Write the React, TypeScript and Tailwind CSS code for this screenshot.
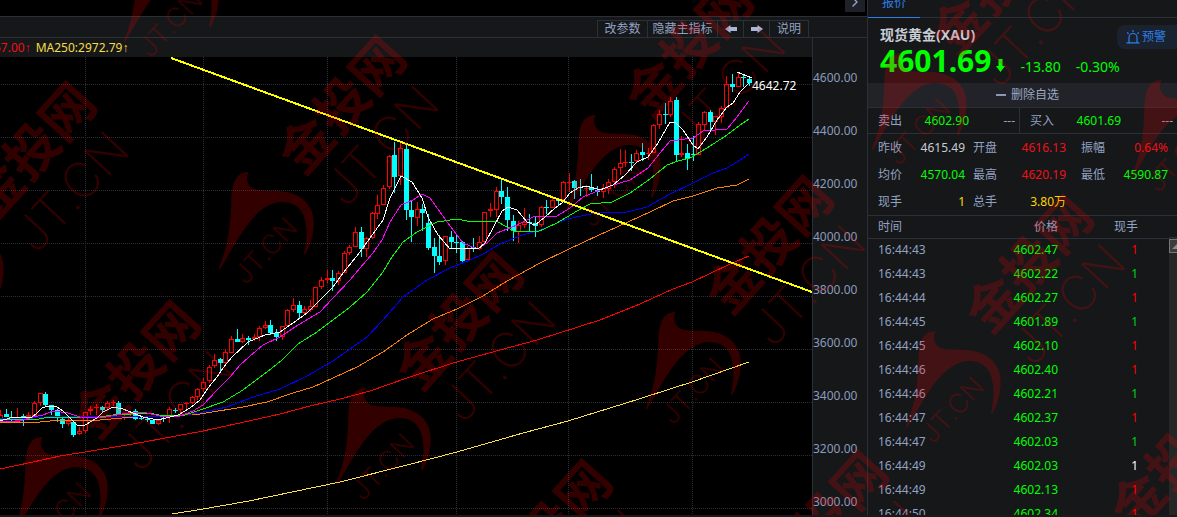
import { ChevronRight } from 'lucide-react';
import clsx from 'clsx';

type Direction = 'up' | 'down';
// high, body top, body bottom, low, direction
type Candle = [number, number, number, number, Direction];

interface Tick {
	time: string;
	price: string;
	volume: string;
	color: string;
}

interface Quote {
	label: string;
	value: string;
	color: string;
}

const u: Direction = 'up';
const d: Direction = 'down';

const candles: Candle[] = [
	[410, 415, 421, 423, u], [409, 414, 417, 417, d], [411, 417, 420, 421, d], [408, 417, 421, 421, u],
	[414, 416, 419, 426, d], [412, 415, 417, 418, u], [401, 403, 416, 416, u], [393, 393, 403, 406, u],
	[392, 394, 405, 407, d], [405, 405, 410, 415, d], [409, 410, 417, 422, d], [417, 419, 424, 428, d],
	[418, 421, 424, 426, u], [420, 422, 435, 437, d], [427, 431, 434, 435, u], [412, 412, 431, 433, u],
	[406, 409, 411, 415, u], [404, 407, 408, 415, u], [406, 407, 410, 413, d], [401, 403, 408, 411, u],
	[400, 402, 403, 406, u], [401, 403, 414, 414, d], [413, 414, 415, 420, u], [412, 413, 415, 417, u],
	[409, 411, 419, 420, d], [416, 418, 419, 420, d], [417, 419, 420, 422, d], [420, 420, 424, 424, d],
	[419, 420, 424, 425, u], [416, 418, 419, 422, d], [407, 409, 416, 423, u], [408, 410, 411, 413, d],
	[404, 404, 410, 415, u], [402, 403, 404, 410, u], [396, 397, 403, 404, u], [388, 389, 397, 400, u],
	[378, 382, 389, 392, u], [365, 367, 381, 383, u], [354, 360, 366, 368, u], [358, 359, 363, 372, d],
	[349, 352, 363, 365, u], [336, 339, 353, 353, u], [329, 339, 342, 342, d], [334, 338, 342, 343, u],
	[336, 338, 340, 345, d], [334, 337, 339, 341, u], [326, 328, 337, 341, u], [321, 325, 328, 329, u],
	[320, 325, 333, 335, d], [329, 333, 337, 341, d], [326, 326, 337, 340, u], [309, 310, 326, 326, u],
	[298, 305, 310, 312, u], [301, 305, 313, 318, d], [306, 309, 313, 315, u], [300, 306, 310, 312, u],
	[287, 287, 307, 307, u], [277, 280, 287, 289, u], [270, 278, 280, 283, u], [270, 278, 281, 291, d],
	[271, 273, 281, 285, u], [251, 253, 273, 273, u], [245, 247, 253, 255, u], [227, 232, 247, 247, u],
	[227, 232, 249, 257, d], [237, 238, 249, 257, u], [212, 213, 238, 239, u], [195, 205, 214, 219, u],
	[185, 188, 205, 205, u], [155, 156, 187, 189, u], [142, 155, 177, 193, d], [143, 148, 176, 185, u],
	[144, 149, 210, 220, d], [200, 210, 217, 242, d], [202, 209, 218, 226, u], [204, 209, 213, 231, d],
	[214, 223, 248, 250, d], [238, 247, 256, 273, d], [235, 256, 262, 265, d], [236, 236, 261, 265, u],
	[231, 237, 242, 249, d], [235, 242, 243, 253, d], [241, 242, 261, 262, d], [246, 248, 260, 261, u],
	[238, 247, 249, 252, d], [236, 242, 249, 250, u], [212, 212, 242, 243, u], [203, 209, 211, 217, u],
	[187, 191, 210, 217, u], [179, 191, 197, 204, d], [187, 197, 220, 231, d], [215, 221, 231, 241, d],
	[221, 225, 232, 243, u], [208, 222, 225, 228, u], [214, 222, 223, 231, d], [216, 223, 226, 237, d],
	[206, 207, 225, 227, u], [200, 207, 208, 214, d], [198, 200, 208, 208, u], [198, 199, 201, 205, d],
	[181, 182, 200, 201, u], [173, 182, 183, 192, u], [180, 181, 188, 199, d], [179, 187, 188, 196, d],
	[185, 188, 189, 197, u], [174, 187, 190, 192, d], [186, 190, 192, 196, d], [184, 188, 192, 198, u],
	[179, 182, 189, 194, u], [167, 169, 182, 188, u], [149, 163, 168, 175, u], [150, 162, 163, 167, u],
	[154, 162, 163, 171, d], [150, 153, 161, 163, u], [143, 152, 155, 161, d], [148, 153, 154, 160, u],
	[124, 125, 153, 153, u], [110, 114, 125, 129, u], [103, 114, 115, 124, d], [97, 101, 115, 117, u],
	[97, 100, 155, 161, d], [136, 153, 155, 157, u], [144, 153, 159, 170, d], [136, 154, 155, 161, d],
	[122, 124, 155, 155, u], [111, 112, 125, 130, u], [110, 112, 122, 130, d], [116, 116, 122, 135, u],
	[106, 108, 117, 123, u], [76, 84, 108, 108, u], [74, 84, 87, 92, d], [73, 77, 87, 87, u],
	[75, 77, 78, 87, d], [78, 79, 83, 86, d],
];

const movingAverages = [
	{
		name: 'MA250',
		color: '#ffe14d',
		points: '172,514 203,509 249,501 340,482 407,465 457,452 523,433 568,421 639,399 670,389 692,382 749,362',
	},
	{
		name: 'MA120',
		color: '#ff0000',
		points: '0,469 33,462 60,456 85,452 133,444 203,431 249,421 280,414 310,406 340,399 370,391 407,378 453,363 500,350 537,340 600,320 640,304 673,289 692,282 730,264 749,256',
	},
	{
		name: 'MA60',
		color: '#ff8000',
		points: '0,422 40,422 60,420 100,420 133,417 165,416 200,414 243,407 267,402 293,393 313,387 333,378 357,367 383,352 407,335 433,319 457,309 483,296 507,281 540,263 567,250 599,235 617,227 650,212 673,201 693,196 717,188 737,185 749,179',
	},
	{
		name: 'MA40',
		color: '#0000ff',
		points: '0,418 33,418 60,416 170,417 200,413 227,407 253,397 280,389 307,376 333,361 350,349 367,337 383,320 403,297 427,280 450,268 470,260 483,254 500,244 523,235 540,230 567,219 600,212 627,212 647,207 670,194 693,183 713,173 727,168 737,162 749,154',
	},
	{
		name: 'MA20',
		color: '#00ff00',
		points: '0,419 33,420 50,417 80,418 100,417 113,415 150,413 163,416 185,415 203,409 223,402 243,390 267,372 282,360 298,344 317,332 333,320 350,307 367,292 383,272 392,257 403,242 417,232 427,227 437,222 457,219 467,221 496,221 507,227 513,231 537,232 557,223 577,211 590,204 612,202 630,193 650,179 667,165 678,161 690,158 707,148 727,135 740,125 749,119',
	},
	{
		name: 'MA10',
		color: '#ff00ff',
		points: '0,422 20,421 33,417 43,415 53,411 68,413 80,417 100,418 117,415 133,412 143,412 160,416 180,416 193,411 203,405 217,390 230,377 240,365 249,357 263,345 280,337 298,325 320,312 333,298 350,280 360,268 373,253 382,240 390,222 401,205 413,200 422,194 430,198 440,212 453,230 463,243 477,249 487,243 497,233 517,225 533,217 557,216 570,208 583,197 600,190 610,186 630,180 648,168 660,153 670,141 693,138 703,131 727,129 737,117 749,101',
	},
	{
		name: 'MA5',
		color: '#ffffff',
		points: '0,421 10,418 20,417 32,417 37,413 42,408 48,406 57,407 63,411 70,418 78,426 85,425 97,418 103,412 113,407 123,409 133,413 143,417 158,420 170,417 178,415 190,408 200,400 208,388 217,377 223,368 232,357 248,342 265,335 280,332 293,323 307,313 320,300 333,287 343,273 360,252 370,238 383,220 390,198 401,176 412,182 422,198 428,217 438,235 450,249 467,248 478,249 485,243 493,228 502,211 508,207 517,210 527,222 535,225 545,217 555,208 562,203 570,193 578,188 587,186 600,190 613,185 625,175 637,162 648,157 658,143 670,122 675,122 683,130 693,145 698,149 707,137 717,120 727,107 733,103 740,92 749,83',
	},
];

const gridRows = [84, 137, 190, 243, 296, 349, 402, 455, 508];
const gridColumns = [85, 203, 327, 456, 568, 692];
const axisLabels = ['4600.00', '4400.00', '4200.00', '4000.00', '3800.00', '3600.00', '3400.00', '3200.00', '3000.00'];

const quotes: Quote[] = [
	{ label: '昨收', value: '4615.49', color: 'text-[#c8ccd4]' },
	{ label: '开盘', value: '4616.13', color: 'text-[#f01018]' },
	{ label: '振幅', value: '0.64%', color: 'text-[#f01018]' },
	{ label: '均价', value: '4570.04', color: 'text-[#00ff00]' },
	{ label: '最高', value: '4620.19', color: 'text-[#f01018]' },
	{ label: '最低', value: '4590.87', color: 'text-[#00ff00]' },
	{ label: '现手', value: '1', color: 'text-[#ffd800]' },
	{ label: '总手', value: '3.80万', color: 'text-[#ffd800]' },
];

const RED = 'text-[#ff0000]';
const GREEN = 'text-[#00d018]';
const WHITE = 'text-white';

const ticks: Tick[] = [
	{ time: '16:44:43', price: '4602.47', volume: '1', color: RED },
	{ time: '16:44:43', price: '4602.22', volume: '1', color: GREEN },
	{ time: '16:44:44', price: '4602.27', volume: '1', color: RED },
	{ time: '16:44:45', price: '4601.89', volume: '1', color: GREEN },
	{ time: '16:44:45', price: '4602.10', volume: '1', color: RED },
	{ time: '16:44:46', price: '4602.40', volume: '1', color: RED },
	{ time: '16:44:46', price: '4602.21', volume: '1', color: GREEN },
	{ time: '16:44:47', price: '4602.37', volume: '1', color: RED },
	{ time: '16:44:47', price: '4602.03', volume: '1', color: GREEN },
	{ time: '16:44:49', price: '4602.03', volume: '1', color: WHITE },
	{ time: '16:44:49', price: '4602.13', volume: '1', color: RED },
	{ time: '16:44:50', price: '4602.34', volume: '1', color: RED },
];

// Top of the horn in every stamp
const stamps = [
	[150, -55], [-65, 218], [39, 437], [245, 172], [362, 388], [451, 596],
	[592, 115], [672, 312], [727, 587], [898, 53], [932, 331], [1077, 528], [1158, 80],
];

function CandleShape({ candle, index }: { candle: Candle; index: number }) {
	const [high, top, bottom, low, direction] = candle;
	const x = Math.floor(0.7 + index * 5.63);
	const height = Math.max(bottom - top, 1);

	if (direction === 'down') {
		return (
			<g fill="#00ffff">
				<rect x={x} y={high} width={1} height={low - high} />
				<rect x={x - 2} y={top} width={5} height={height} />
			</g>
		);
	}
	return (
		<g fill="#ff0000">
			<rect x={x} y={high} width={1} height={Math.max(top - high, 0)} />
			<rect x={x} y={bottom} width={1} height={Math.max(low - bottom, 0)} />
			{height < 3 ? (
				<rect x={x - 2} y={top} width={5} height={height} />
			) : (
				<rect x={x - 1.5} y={top + 0.5} width={4} height={height - 1} fill="#000000" stroke="#ff0000" />
			)}
		</g>
	);
}

function PriceChart() {
	return (
		<svg
			viewBox="0 57 812 458"
			preserveAspectRatio="xMinYMin"
			shapeRendering="crispEdges"
			className="block h-[458px] w-full bg-black"
		>
			<g stroke="#2c2f36" strokeDasharray="1 1">
				{gridRows.map((y) => (
					<line key={y} x1={1} x2={812} y1={y + 0.5} y2={y + 0.5} />
				))}
				{gridColumns.map((x) => (
					<line key={x} x1={x + 0.5} x2={x + 0.5} y1={57} y2={515} />
				))}
			</g>
			{candles.map((candle, i) => (
				<CandleShape key={i} candle={candle} index={i} />
			))}
			{movingAverages.map((ma) => (
				<polyline key={ma.name} points={ma.points} fill="none" stroke={ma.color} />
			))}
			<line x1={171} y1={58} x2={812} y2={292} stroke="#ffff00" strokeWidth={2} />
			<line x1={737} y1={72} x2={752} y2={78} stroke="#ffffff" />
			<text x={752} y={90} fill="#ffffff" fontSize={12}>
				4642.72
			</text>
		</svg>
	);
}

function ToolbarArrow({ flip }: { flip?: boolean }) {
	return (
		<svg viewBox="0 0 12 8" className={clsx('h-2 w-3', flip && 'rotate-180')} fill="#a9b6d6">
			<path d="M0 4 5.500 0v2H12v4H5.500v2Z" />
		</svg>
	);
}

function Toolbar() {
	const button = 'flex items-center justify-center border-l border-t border-[#2b2f37] whitespace-nowrap';
	return (
		<div className="flex h-[22px] justify-end border-y border-[#2b2f37] pr-[58px] pt-[3px] text-[#93a1c2]">
			<button className={clsx(button, 'w-[50px]')}>改参数</button>
			<button className={clsx(button, 'w-[70px]')}>隐藏主指标</button>
			<button className={clsx(button, 'w-[26px]')} aria-label="previous">
				<ToolbarArrow />
			</button>
			<button className={clsx(button, 'w-[26px]')} aria-label="next">
				<ToolbarArrow flip />
			</button>
			<button className={clsx(button, 'w-10 border-r')}>说明</button>
		</div>
	);
}

function ChartPanel() {
	return (
		<section className="min-w-0 flex-1">
			<div className="flex h-4 justify-end bg-black pr-[2px]">
				<button className="flex h-3 w-5 items-center justify-center overflow-hidden bg-[#1f2128] text-[#9aa6c0]" aria-label="expand">
					<ChevronRight className="mb-2 size-4 flex-none" strokeWidth={2} />
				</button>
			</div>
			<Toolbar />
			<div className="flex">
				<div className="min-w-0 flex-1">
					<div className="flex h-[19px] items-center gap-[5px] overflow-hidden whitespace-nowrap">
						<span className="-ml-[6px] text-[#f01018]">57.00↑</span>
						<span className="text-[#f5dc4b]">MA250:2972.79↑</span>
					</div>
					<PriceChart />
				</div>
				<ul className="flex w-[55px] flex-none flex-col gap-[37px] border-l border-[#2b2f37] pt-8 text-[#8b9bbd]">
					{axisLabels.map((label) => (
						<li key={label}>{label}</li>
					))}
				</ul>
			</div>
		</section>
	);
}

function AlarmIcon() {
	return (
		<svg viewBox="0 0 14 14" className="size-[14px]" fill="none" stroke="#2f7fe6" strokeWidth={1.2}>
			<path d="M3 12.5V7.5a4 4 0 0 1 8 0v5M.5 12.9h13M7 0v2M1.2 2.5l1.4 1.3M12.8 2.5l-1.4 1.3" />
		</svg>
	);
}

function QuoteHeader() {
	return (
		<>
			<nav className="flex h-[18px] items-end border-b border-[#2b2f37]">
				<button className="-mb-px border-b border-[#2f7fe6] px-[14px] pb-[6px] text-[#2f7fe6]">报价</button>
			</nav>
			<div className="flex h-[31px] items-end justify-between pl-3">
				<h1 className="pb-1 text-sm font-bold text-[#c8ccd4]">现货黄金(XAU)</h1>
				<button className="flex h-6 w-[60px] items-center gap-[2px] rounded-l-lg bg-[#1a2230] pl-[9px] text-[#2f7fe6]">
					<AlarmIcon />
					预警
				</button>
			</div>
			<div className="flex h-[34px] items-baseline pl-3 text-sm leading-6 text-[#00ff00]">
				<strong className="text-[30px] leading-6 font-bold">4601.69</strong>
				<svg viewBox="0 0 9 13" className="ml-[5px] h-[13px] w-[9px]" fill="#00ff00">
					<path d="M2.500 0h4v7H9L4.500 13 0 7h2.500Z" />
				</svg>
				<span className="ml-[15px]">-13.80</span>
				<span className="ml-[15px]">-0.30%</span>
			</div>
			<button className="flex h-6 w-full items-center justify-center gap-[5px] bg-[#212328] pl-[10px] text-[#9ca8c4]">
				<span className="h-[2px] w-[10px] bg-[#8b97b3]" />
				<span>删除自选</span>
			</button>
		</>
	);
}

function BidAsk() {
	return (
		<div className="flex h-[27px] items-center border-y border-[#2b2f37] text-[#93a1c2]">
			<div className="flex h-full w-[152px] items-center border-r border-[#2b2f37] pl-[10px] pr-1">
				<span className="flex-1">卖出</span>
				<span className="text-[#00ff00]">4602.90</span>
				<span className="w-[46px] text-right">---</span>
			</div>
			<div className="flex h-full flex-1 items-center pl-[10px] pr-1">
				<span className="flex-1">买入</span>
				<span className="text-[#00ff00]">4601.69</span>
				<span className="w-[52px] text-right">---</span>
			</div>
		</div>
	);
}

function QuoteGrid() {
	return (
		<dl className="grid h-[81px] grid-cols-[95px_108px_87px] pl-[10px] text-[#93a1c2]">
			{quotes.map((quote) => (
				<div
					key={quote.label}
					className="flex h-[27px] items-center justify-between nth-[3n+1]:pr-2 nth-[3n+2]:pr-[15px]"
				>
					<dt>{quote.label}</dt>
					<dd className={quote.color}>{quote.value}</dd>
				</div>
			))}
		</dl>
	);
}

function TickTable() {
	return (
		<div className="flex h-[300px] overflow-hidden border-t border-[#2b2f37]">
			<table className="h-[310px] flex-1 table-fixed self-start text-[#93a1c2]">
				<thead>
					<tr className="h-[22px] border-b border-[#2b2f37]">
						<th className="pl-[10px] text-left font-normal">时间</th>
						<th className="w-20 text-right font-normal">价格</th>
						<th className="w-20 text-right font-normal">现手</th>
						<th className="w-[31px]" />
					</tr>
				</thead>
				<tbody>
					{ticks.map((tick, i) => (
						<tr key={i} className="h-6">
							<td className="pl-[10px]">{tick.time}</td>
							<td className="text-right text-[#00ff00]">{tick.price}</td>
							<td className={clsx('text-right', tick.color)}>{tick.volume}</td>
							<td />
						</tr>
					))}
				</tbody>
			</table>
			<div className="w-2 bg-[#262626]">
				<div className="h-[22px] border-b border-[#2b2f37] bg-[#151719]" />
				<button className="mt-px flex h-[14px] w-full items-center justify-end overflow-hidden border border-r-0 border-[#777777] bg-[#3c3c3c]" aria-label="scroll up">
					<svg viewBox="0 0 5 5" className="size-[5px]" fill="#8a8a8a">
						<path d="M5 0v5H0Z" />
					</svg>
				</button>
			</div>
		</div>
	);
}

function Watermark() {
	return (
		<svg className="pointer-events-none absolute inset-0 size-full" opacity={0.2} fill="#ff0000" aria-hidden="true">
			{stamps.map(([x, y]) => (
				<g key={`${x}-${y}`} transform={`translate(${x} ${y})`}>
					<path
						transform="scale(.3333) translate(-105 -426)"
						d="M117 427C106 440 110 465 130 476C150 486 200 478 235 487C285 500 312 535 311 580C311 615 300 650 286 674L282 670C292 630 293 590 280 555C268 525 235 512 205 517C130 530 85 625 30 718C26 719 27 712 30 705C55 640 62 590 64 510C66 455 80 425 117 427Z"
					/>
					<text transform="translate(58 5) rotate(-48)" fontSize={53} className="font-bold">
						金投网
					</text>
					<text transform="translate(101 37) rotate(-47)" fontSize={49} className="font-['Inter'] font-extralight">
						JT.CN
					</text>
					<text transform="translate(1 114) rotate(-47)" fontSize={27} className="font-['Inter'] font-light">
						JT.CN
					</text>
				</g>
			))}
		</svg>
	);
}

export default function App() {
	return (
		<main className="relative overflow-hidden border-b-2 border-[#1b1819] bg-[#151719] font-['Noto_Sans','Liberation_Sans','Noto_Sans_CJK_SC',sans-serif] text-xs">
			<div className="flex">
				<ChartPanel />
				<aside className="w-[310px] flex-none border-l border-[#2b2f37]">
					<QuoteHeader />
					<BidAsk />
					<QuoteGrid />
					<TickTable />
				</aside>
			</div>
			<Watermark />
		</main>
	);
}
